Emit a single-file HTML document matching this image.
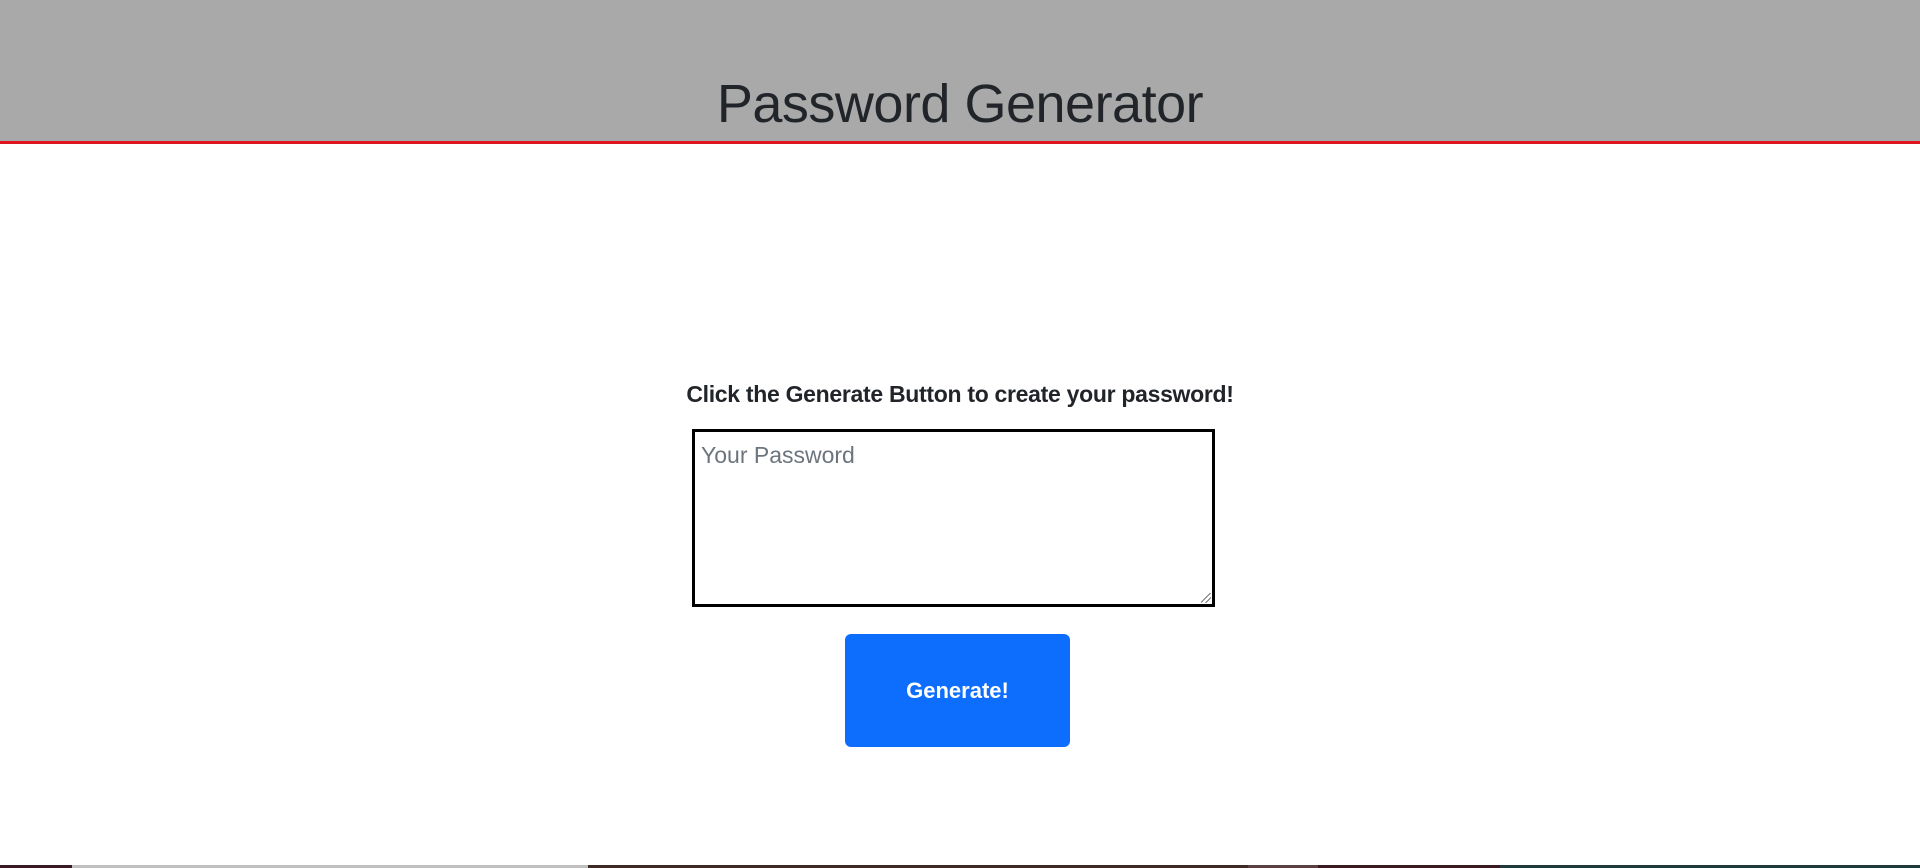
<!DOCTYPE html>
<html><head><meta charset="utf-8"><style>
html,body{margin:0;padding:0;width:1920px;height:868px;overflow:hidden;background:#fff;font-family:"Liberation Sans",sans-serif;position:relative}
.hdr{position:absolute;left:0;top:0;width:1920px;height:141px;background:#a9a9a9;border-bottom:3px solid #e0141e}
.hdr h1{position:absolute;left:0;right:0;top:74px;margin:0;text-align:center;font-size:54px;line-height:60px;font-weight:normal;color:#212529;letter-spacing:-0.5px}
.sub{position:absolute;left:0;width:1920px;top:381px;text-align:center;font-size:23px;font-weight:bold;color:#212529;letter-spacing:-0.3px}
.ta{position:absolute;left:692px;top:429px;width:517px;height:172px;border:3px solid #000;box-sizing:content-box}
.ta span{position:absolute;left:6px;top:10px;font-size:23px;color:#6c757d}
.rs{position:absolute;right:1px;bottom:1px;width:10px;height:10px;background:linear-gradient(135deg,transparent 45%,#777 45%,#777 52%,transparent 52%,transparent 70%,#777 70%,#777 77%,transparent 77%)}
.btn{position:absolute;left:845px;top:634px;width:225px;height:113px;background:#0d6efd;border-radius:6px;color:#fff;font-weight:bold;font-size:22px;display:flex;align-items:center;justify-content:center}
.strip{position:absolute;bottom:0;height:3px}
</style></head><body>
<div class="hdr"><h1>Password Generator</h1></div>
<div class="sub">Click the Generate Button to create your password!</div>
<div class="ta"><span>Your Password</span><div class="rs"></div></div>
<div class="btn">Generate!</div>
<div class="strip" style="left:0;width:72px;background:#3a1a24"></div>
<div class="strip" style="left:72px;width:516px;background:#c0c0c0"></div>
<div class="strip" style="left:588px;width:660px;background:#3d2a24"></div>
<div class="strip" style="left:1248px;width:70px;background:#5a4040"></div>
<div class="strip" style="left:1318px;width:182px;background:#3a1a20"></div>
<div class="strip" style="left:1500px;width:420px;background:#1f3a3a"></div>
</body></html>
